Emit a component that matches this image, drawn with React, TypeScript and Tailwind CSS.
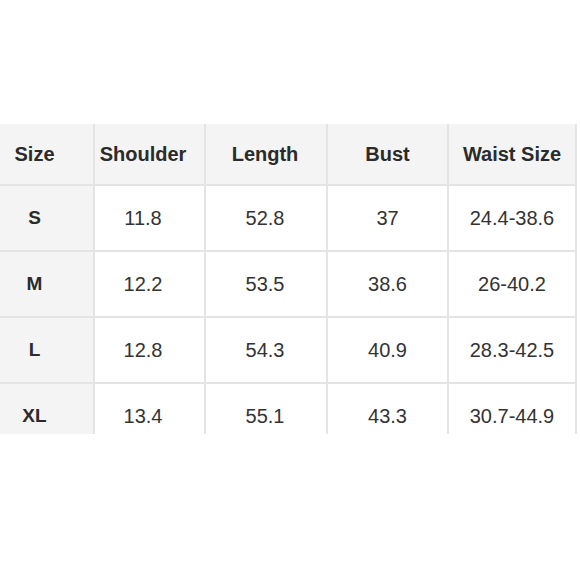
const headers = ['Size', 'Shoulder', 'Length', 'Bust', 'Waist Size'];

const rows = [
  ['S', '11.8', '52.8', '37', '24.4-38.6'],
  ['M', '12.2', '53.5', '38.6', '26-40.2'],
  ['L', '12.8', '54.3', '40.9', '28.3-42.5'],
  ['XL', '13.4', '55.1', '43.3', '30.7-44.9'],
];

// per-column padding so text sits where the source image has it
const colPad = ['pr-[24px]', 'pr-[13px]', 'pr-[2px]', 'pr-[0px]', 'pr-[0px]'];

export default function App() {
  return (
    <div
      className="w-[580px] h-[580px] bg-white pt-[124px]"
      style={{ fontFamily: '"Liberation Sans", Arial, sans-serif' }}
    >
      <div className="h-[310px] overflow-hidden">
        <div className="w-[577px] bg-[#e4e4e4] pr-[2px] grid grid-cols-[93px_109px_120px_119px_126px] auto-rows-[64px] [grid-template-rows:60px] gap-[2px] text-[#2b2b2b]">
          {headers.map((h, i) => (
            <div
              key={h}
              className={`bg-[#f4f4f4] flex items-center justify-center font-bold text-[20px] ${colPad[i]}`}
            >
              {h}
            </div>
          ))}
          {rows.map((row) =>
            row.map((cell, i) => (
              <div
                key={row[0] + i}
                className={
                  i === 0
                    ? `bg-[#f4f4f4] flex items-center justify-center font-bold text-[19px] ${colPad[i]}`
                    : `bg-white flex items-center justify-center text-[20px] text-[#333] ${colPad[i]}`
                }
              >
                {cell}
              </div>
            ))
          )}
        </div>
      </div>
    </div>
  );
}
